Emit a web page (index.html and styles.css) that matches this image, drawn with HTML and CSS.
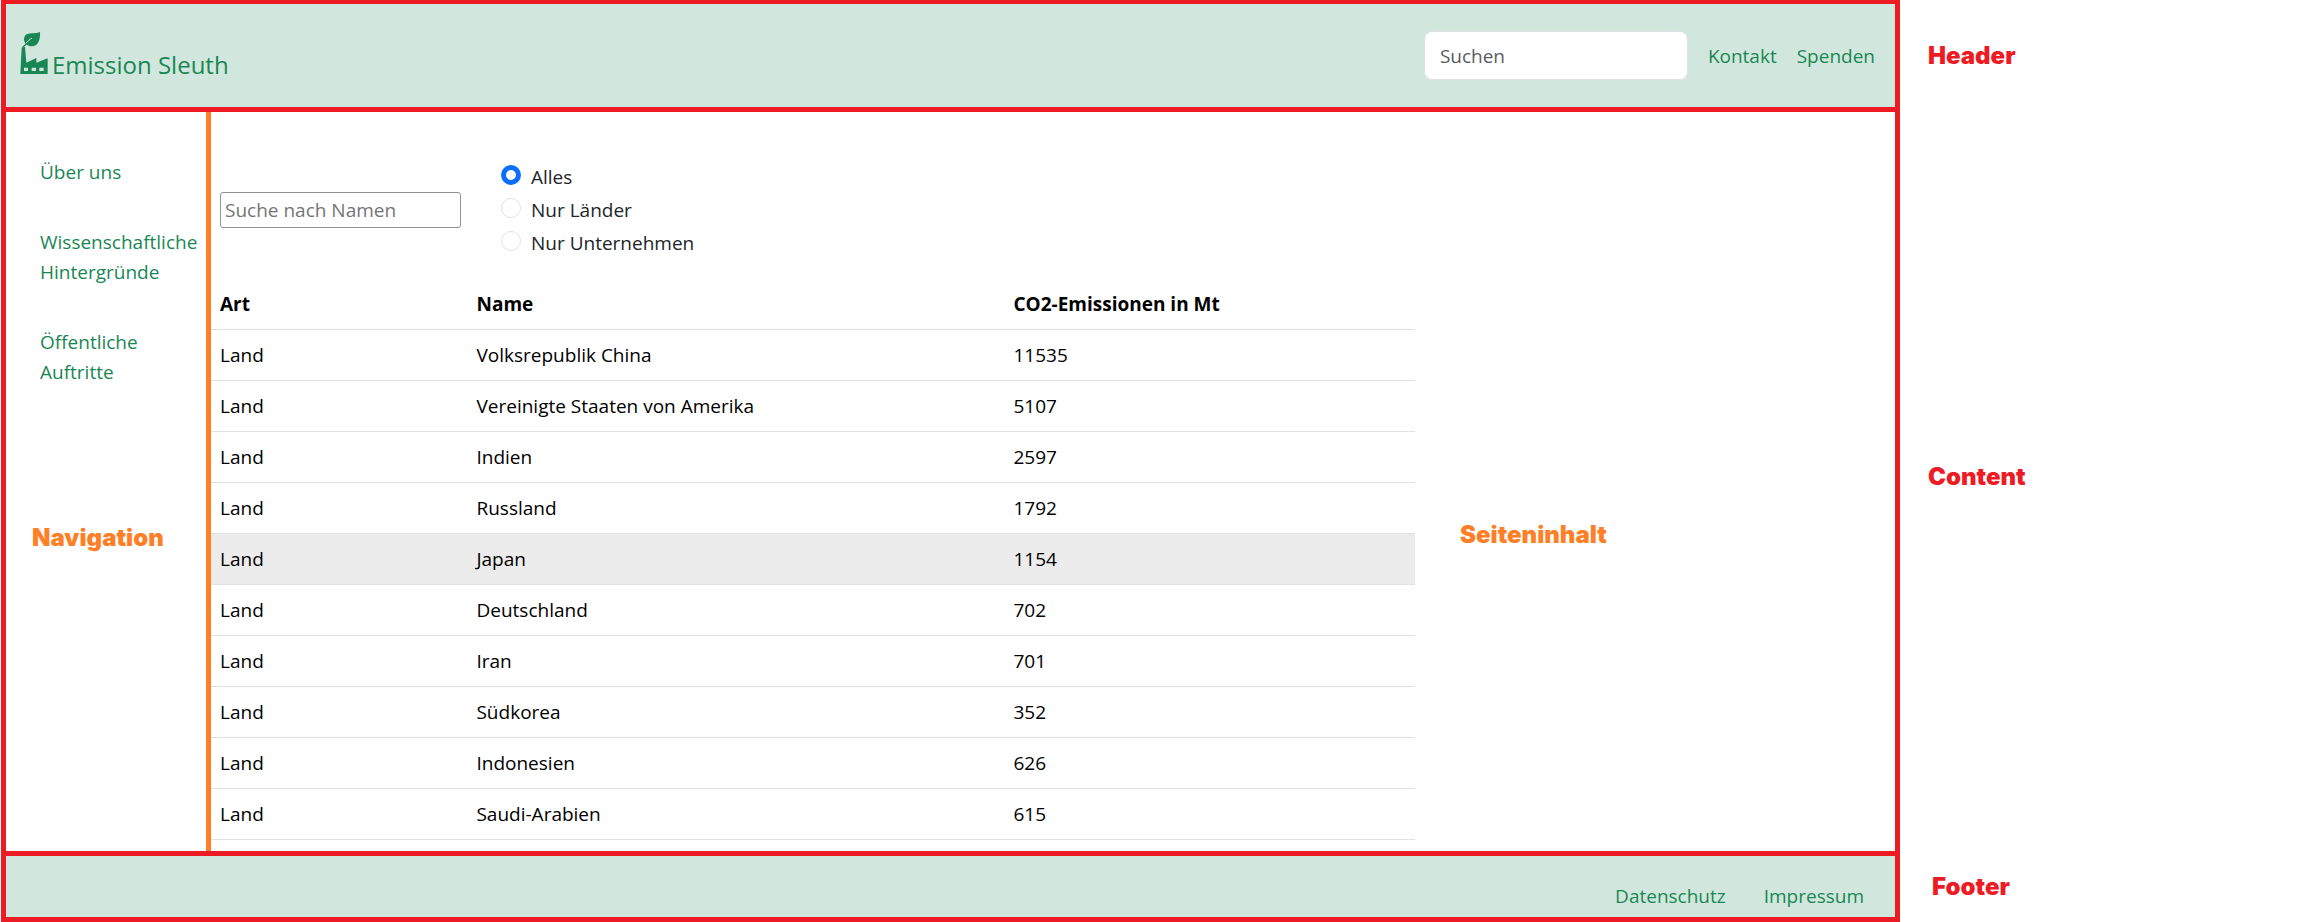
FILE: index.html
```html
<!DOCTYPE html>
<html lang="de">
<head>
<meta charset="utf-8">
<title>Emission Sleuth</title>
<link rel="stylesheet" href="styles.css">
</head>
<body class="page">
  <header class="header">
    <a class="brand" href="#">
      <svg class="brand-icon" viewBox="0 0 84 126" aria-hidden="true">
        <path fill="currentColor" fill-rule="evenodd" d="M5 48L15 44L19 92L49 78V92L83 79V126H1ZM12 107V117H24V107ZM35 107V117H48V107ZM58 107V117H71V107Z"/>
        <path fill="currentColor" d="M60 0C62 24 53 43 36 43C27 43 21 39 17 35C10 27 10 13 20 7C32 1 47 6 60 0Z"/>
        <path fill="none" stroke="#d1e7dd" stroke-width="3" d="M36 18C30 21 24 27 18 34"/>
        <path fill="none" stroke="currentColor" stroke-width="4" d="M21 34L7 47"/>
      </svg>
      <span>Emission Sleuth</span>
    </a>
    <nav class="header-nav">
      <input class="search" type="search" placeholder="Suchen" aria-label="Suchen">
      <a href="#">Kontakt</a>
      <a href="#">Spenden</a>
    </nav>
  </header>
  <p class="caption region">Header</p>

  <div class="content">
    <aside class="sidebar">
      <nav class="side-nav">
        <a href="#">Über uns</a>
        <a href="#">Wissenschaftliche Hintergründe</a>
        <a href="#">Öffentliche Auftritte</a>
      </nav>
      <p class="caption part">Navigation</p>
    </aside>
    <main class="main">
      <section class="data">
        <form class="filters">
          <input class="name-filter" type="text" placeholder="Suche nach Namen" aria-label="Suche nach Namen">
          <div class="options">
            <label class="option"><input type="radio" name="art" checked><span>Alles</span></label>
            <label class="option"><input type="radio" name="art"><span>Nur Länder</span></label>
            <label class="option"><input type="radio" name="art"><span>Nur Unternehmen</span></label>
          </div>
        </form>
        <table class="table">
          <colgroup><col class="col-art"><col class="col-name"><col></colgroup>
          <thead><tr><th>Art</th><th>Name</th><th>CO2-Emissionen in Mt</th></tr></thead>
          <tbody>
            <tr><td>Land</td><td>Volksrepublik China</td><td>11535</td></tr>
            <tr><td>Land</td><td>Vereinigte Staaten von Amerika</td><td>5107</td></tr>
            <tr><td>Land</td><td>Indien</td><td>2597</td></tr>
            <tr><td>Land</td><td>Russland</td><td>1792</td></tr>
            <tr class="active"><td>Land</td><td>Japan</td><td>1154</td></tr>
            <tr><td>Land</td><td>Deutschland</td><td>702</td></tr>
            <tr><td>Land</td><td>Iran</td><td>701</td></tr>
            <tr><td>Land</td><td>Südkorea</td><td>352</td></tr>
            <tr><td>Land</td><td>Indonesien</td><td>626</td></tr>
            <tr><td>Land</td><td>Saudi-Arabien</td><td>615</td></tr>
          </tbody>
        </table>
      </section>
      <p class="caption part">Seiteninhalt</p>
    </main>
  </div>
  <p class="caption region region-content">Content</p>

  <footer class="footer">
    <a href="#">Datenschutz</a>
    <a href="#">Impressum</a>
  </footer>
  <p class="caption region region-footer">Footer</p>
</body>
</html>
```

FILE: styles.css
```css
*,
*::before,
*::after {
  box-sizing: border-box;
}

.page {
  display: grid;
  grid-template-columns: 9fr 2fr;
  grid-template-rows: auto 1fr auto;
  min-height: 100vh;
  margin: 0;
  padding-left: 1px;
  background: #fff;
  color: #212529;
  font: 19px/30px "Open Sans", "Noto Sans", sans-serif;
}

a {
  color: #198754;
  text-decoration: none;
}

input {
  font: inherit;
}

.caption {
  margin: 0;
  font: 900 24px/30px Inter, "Liberation Sans", sans-serif;
}

.region {
  align-self: center;
  padding-left: 28px;
  color: #ed1c24;
}

.region-content {
  padding-bottom: 10px;
}

.region-footer {
  padding-left: 32px;
}

.part {
  color: #ff7f27;
}

.header {
  display: flex;
  align-items: center;
  justify-content: space-between;
  min-height: 112px;
  padding: 0 20px 0 14px;
  border: 5px solid #ed1c24;
  border-top-width: 4px;
  background: #d1e7dd;
}

.brand {
  display: flex;
  align-items: baseline;
  gap: 4px;
  font-size: 24px;
}

.brand-icon {
  width: 28px;
  height: 42px;
}

.header-nav {
  display: flex;
  align-items: center;
  gap: 20px;
}

.search {
  width: 264px;
  height: 49px;
  padding: 0 15px;
  border: 1px solid #dee2e6;
  border-radius: 8px;
  background: #fff;
}

.search::placeholder {
  color: #595c5f;
}

.content {
  display: flex;
  border: solid #ed1c24;
  border-width: 0 5px;
}

.sidebar {
  flex: none;
  width: 205px;
  padding: 45px 0 0 34px;
  border-right: 5px solid #ff7f27;
}

.side-nav {
  display: flex;
  flex-direction: column;
  gap: 40px;
  margin-bottom: 136px;
}

.sidebar .part {
  margin-left: -8px;
}

.main {
  display: flex;
  flex: 1;
  gap: 45px;
}

.main > .part {
  padding-top: 408px;
}

.data {
  flex: none;
  width: 71.5%;
  padding: 50px 0 11px;
}

.filters {
  display: flex;
  align-items: center;
  gap: 40px;
  margin-bottom: 21px;
  padding-left: 9px;
}

.name-filter {
  width: 241px;
  height: 36px;
  padding: 0 4px;
  border: 1px solid #8f8f9d;
  border-radius: 3px;
}

.name-filter::placeholder {
  color: #757575;
}

.options {
  display: grid;
  gap: 3px;
}

.option {
  display: flex;
  gap: 10px;
}

.option input {
  width: 20px;
  height: 20px;
  margin: 3px 0 0;
  border: 1px solid #dee2e6;
  border-radius: 50%;
  background: #fff;
  appearance: none;
}

.option input:checked {
  border: 5px solid #0d6efd;
}

.table {
  width: 100%;
  border-collapse: separate;
  border-spacing: 0;
  table-layout: fixed;
  color: #000;
  text-align: left;
}

.col-art {
  width: 21.3%;
}

.col-name {
  width: 44.6%;
}

.table th,
.table td {
  padding: 10px 9px;
  border-bottom: 1px solid #dee2e6;
}

.active td {
  background: #ececec;
}

.footer {
  display: flex;
  justify-content: flex-end;
  gap: 38px;
  padding: 25px 31px 6px;
  border: 5px solid #ed1c24;
  background: #d1e7dd;
}
```
